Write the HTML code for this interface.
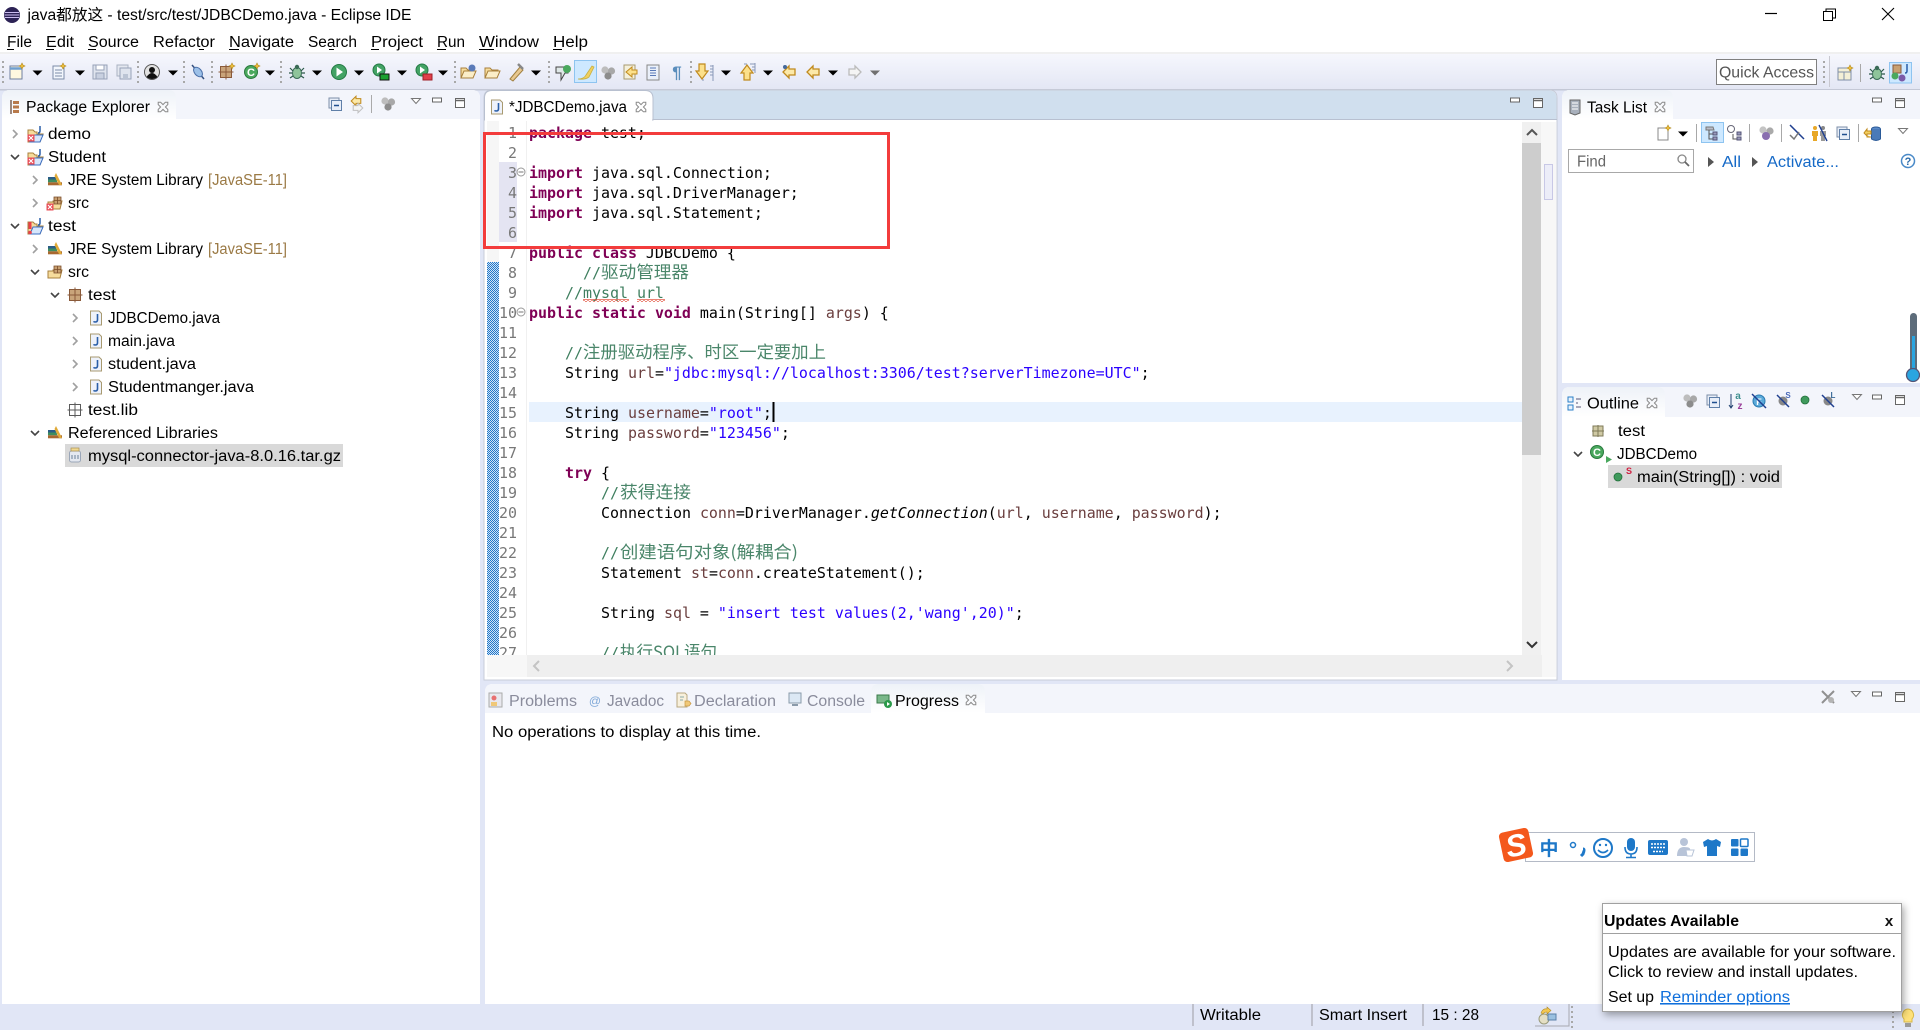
<!DOCTYPE html>
<html lang="en">
<head>
<meta charset="utf-8">
<title>java都放这 - test/src/test/JDBCDemo.java - Eclipse IDE</title>
<style>
html,body{margin:0;padding:0;background:#e1e6f6;width:1920px;height:1030px;overflow:hidden}
svg{display:block;position:absolute;left:0;top:0}
text{white-space:pre}
.u{font:15.5px "Liberation Sans","Noto Sans CJK SC",sans-serif;fill:#000}
.g{fill:#8a8c9c}
.m{font:14.95px "DejaVu Sans Mono","Liberation Mono",monospace;fill:#000}
.k{font-weight:bold;fill:#7f0055}
.s{fill:#2a00ff}
.v{fill:#6a3e3e}
.c{fill:#3f7f5f}
.z{font:17px "Noto Sans CJK SC","Liberation Sans",sans-serif;fill:#4a866a}
.n{font:14.95px "DejaVu Sans Mono","Liberation Mono",monospace;fill:#787878;text-anchor:end}
.l{fill:none;stroke:#555;stroke-width:1.5}
</style>
</head>
<body>
<svg width="1920" height="1030" viewBox="0 0 1920 1030" xmlns="http://www.w3.org/2000/svg">
<defs>
<linearGradient id="tb" x1="0" y1="0" x2="0" y2="1"><stop offset="0" stop-color="#f6f7fd"/><stop offset="1" stop-color="#e3e6f4"/></linearGradient>
<linearGradient id="tabg" x1="0" y1="0" x2="0" y2="1"><stop offset="0" stop-color="#eef2f8"/><stop offset="1" stop-color="#fff"/></linearGradient>
<pattern id="dith" width="2" height="2" patternUnits="userSpaceOnUse"><rect width="2" height="2" fill="#cfe3f7"/><rect width="1" height="1" fill="#2277c8"/><rect x="1" y="1" width="1" height="1" fill="#2277c8"/></pattern>
<pattern id="sq" width="4" height="3" patternUnits="userSpaceOnUse"><path d="M0 2.5L2 .5 4 2.5" fill="none" stroke="#e2503c" stroke-width="1"/></pattern>
<clipPath id="ed"><rect x="499" y="120" width="1023" height="535"/></clipPath>

<path id="ar" d="M-5-2.5H5L0 2.5z" fill="#000"/>
<path id="arg" d="M-5-2.5H5L0 2.5z" fill="#707070"/>
<g id="grip" fill="#a8a8a8"><rect x="-1" y="-11" width="2" height="2"/><rect x="-1" y="-6" width="2" height="2"/><rect x="-1" y="-1" width="2" height="2"/><rect x="-1" y="4" width="2" height="2"/><rect x="-1" y="9" width="2" height="2"/></g>
<path id="cr" d="M-2-4L2 0-2 4" fill="none" stroke="#a0a0a0" stroke-width="1.6"/>
<path id="cd" d="M-4-2L0 2 4-2" fill="none" stroke="#444" stroke-width="1.6"/>
<g id="x" fill="none" stroke="#8a8a8a" stroke-width=".85" transform="scale(1.2)"><path d="M-4-4h2l2 2 2-2h2v2l-2 2 2 2v2h-2l-2-2-2 2h-2v-2l2-2-2-2z"/></g>
<g id="min"><rect x="-4.5" y="-2" width="9" height="4" fill="#fff" stroke="#666" stroke-width="1"/></g>
<g id="max"><rect x="-4.5" y="-4.5" width="9" height="9" fill="#fff" stroke="#666" stroke-width="1"/><path d="M-4.5-2.5h9" stroke="#666" stroke-width="1.5"/></g>
<path id="vm" d="M-4.5-2.5h9L0 2.5z" fill="#fff" stroke="#777" stroke-width="1"/>
<g id="j"><path d="M-5.5-7H3l2.5 2.5V7h-11z" fill="#eef2fb" stroke="#a89a70"/><path d="M1.5-4v6q0 2-2.5 2-1 0-1.5-.6" fill="none" stroke="#2a5ea8" stroke-width="1.6"/></g>
<g id="lib"><rect x="-7" y="-3" width="8" height="2.6" fill="#2a5d86"/><rect x="-7" y="-.5" width="9" height="2.8" fill="#3d8d5f"/><rect x="-7" y="2.3" width="14" height="3" fill="#a8682f"/><path d="M1-7L7 5H4L-.5-4z" fill="#e0aa38"/></g>
<g id="pj"><path d="M-7-3V-6h5l2 2h2v2h6L5 6H-7z" fill="#f6dc9c" stroke="#a8803c" stroke-width="1"/><path d="M-5 6L-2-1H8L5 6z" fill="#d7e6fb" stroke="#3d6fc0" stroke-width="1"/><path d="M5-10v5q0 2-2 2" fill="none" stroke="#2a5ea8" stroke-width="1.5"/></g>
<g id="rx"><rect x="-3.5" y="-3.5" width="7" height="7" fill="#e8505a"/><path d="M-2-2l4 4M2-2l-4 4" stroke="#fff" stroke-width="1.1"/></g>
<g id="sf"><path d="M-7-2h5v-1h9l-2 8H-7z" fill="#f6dc9c" stroke="#a8803c"/><path d="M-1-7H6V0H-1z" fill="#c8a070" stroke="#7a4c2a" stroke-width=".8"/><path d="M2.5-7V0M-1-3.5H6" stroke="#7a4c2a" stroke-width=".8"/></g>
<g id="pk"><rect x="-5.5" y="-5.5" width="11" height="11" fill="#c9a47a" stroke="#8a5a3a"/><path d="M0-7.5V7.5M-7.5 0H7.5" stroke="#8a5a3a" stroke-width="1"/></g>
<g id="pk2"><rect x="-5.5" y="-5.5" width="11" height="11" fill="#fff" stroke="#5a5a5a"/><path d="M0-7.5V7.5M-7.5 0H7.5" stroke="#5a5a5a" stroke-width="1"/></g>
<g id="fold"><path d="M-7-4h5l2 2h6v2H-3L-6 6h-1z" fill="#f6dc9c" stroke="#a8803c"/><path d="M-7 6l3-7H8L5 6z" fill="#fbeec8" stroke="#a8803c"/></g>
<g id="filter"><circle cx="-3" cy="-2" r="3.6" fill="#bdbdbd"/><circle cx="3.5" cy="-1" r="3.6" fill="#a8a8a8"/><circle cx="0" cy="4" r="3.6" fill="#8c8c8c"/></g>
<g id="coll"><rect x="-6" y="-6" width="10" height="10" fill="#e8eef8" stroke="#7d8fa8"/><rect x="-3.5" y="-3.5" width="10" height="10" fill="#e8eef8" stroke="#5f7fa8"/><path d="M-1 1.5h5" stroke="#1f4f8f" stroke-width="1.5"/></g>
<g id="bug"><ellipse rx="4.5" ry="5.5" cy="1" fill="#8ec49a" stroke="#3a6b56"/><path d="M-7-4l3 3M7-4l-3 3M-8 1h3M8 1H5M-7 6l3-2M7 6l-3-2" stroke="#2c5a4a" stroke-width="1.2"/><circle cy="-5" r="2.2" fill="#3a6b56"/></g>
<g id="run"><circle r="7.5" fill="#43a365" stroke="#247a44"/><path d="M-2.5-4.5L4 0-2.5 4.5z" fill="#fff"/></g>
<g id="cg"><circle r="6.5" fill="#4aa85e" stroke="#2a7a3e"/><text x="0" y="4" text-anchor="middle" style="font:bold 11px 'Liberation Sans',sans-serif;fill:#fff">C</text></g>
<g id="dot"><circle r="4" fill="#3f9a5c" stroke="#23703c" stroke-width=".8"/></g>
<g id="bk"><path d="M6-3H0v-3L-6 0 0 6V3H6z" fill="#fce9a8" stroke="#c08a1e" stroke-width="1.3"/></g>
<g id="fw"><path d="M-6-3H0v-3L6 0 0 6V3H-6z" fill="#f4f4f4" stroke="#bbb" stroke-width="1.3"/></g>
</defs>

<!-- title & menu -->
<rect width="1920" height="52" fill="#fff"/>
<rect y="52" width="1920" height="2" fill="#f0f0f0"/>
<circle cx="12" cy="15" r="8" fill="#2c2255"/><path d="M5 12.5h14M4.5 15h15M5 17.5h14" stroke="#cbbcf0" stroke-width="1"/>
<text class="u" x="27.500" y="20" textLength="384" lengthAdjust="spacingAndGlyphs">java都放这 - test/src/test/JDBCDemo.java - Eclipse IDE</text>
<g class="u">
<text class="u" x="7" y="47" textLength="25" lengthAdjust="spacingAndGlyphs">File</text>
<text class="u" x="46" y="47" textLength="28" lengthAdjust="spacingAndGlyphs">Edit</text>
<text class="u" x="88" y="47" textLength="51" lengthAdjust="spacingAndGlyphs">Source</text>
<text class="u" x="153" y="47" textLength="62" lengthAdjust="spacingAndGlyphs">Refactor</text>
<text class="u" x="229" y="47" textLength="65" lengthAdjust="spacingAndGlyphs">Navigate</text>
<text class="u" x="308" y="47" textLength="49" lengthAdjust="spacingAndGlyphs">Search</text>
<text class="u" x="371" y="47" textLength="52" lengthAdjust="spacingAndGlyphs">Project</text>
<text class="u" x="437" y="47" textLength="28" lengthAdjust="spacingAndGlyphs">Run</text>
<text class="u" x="479" y="47" textLength="60" lengthAdjust="spacingAndGlyphs">Window</text>
<text class="u" x="553" y="47" textLength="35" lengthAdjust="spacingAndGlyphs">Help</text>
</g>
<path d="M7 49.5h7M46 49.5h8M88 49.5h8M199 49.5h5M229 49.5h10M329 49.5h5M371 49.5h8M437 49.5h9M479 49.5h15M553 49.5h9" stroke="#000" stroke-width="1"/>
<path d="M1765 13.5h12" stroke="#000" stroke-width="1.2"/>
<rect x="1823.5" y="11.5" width="9" height="9" fill="#fff" stroke="#000"/><path d="M1826 11.5V9h9.5v9H1833" fill="none" stroke="#000"/>
<path d="M1882 8l12 12M1894 8l-12 12" stroke="#000" stroke-width="1.1"/>

<!-- toolbar -->
<rect y="54" width="1920" height="36" fill="url(#tb)"/>
<rect y="89" width="1920" height="1.5" fill="#c4c8d6"/>
<use href="#grip" x="3" y="72"/><use href="#grip" x="138" y="72"/><use href="#grip" x="184" y="72"/><use href="#grip" x="212" y="72"/><use href="#grip" x="281" y="72"/><use href="#grip" x="455" y="72"/><use href="#grip" x="549" y="72"/><use href="#grip" x="691" y="72"/>
<g transform="translate(16 72)"><rect x="-6" y="-6" width="12" height="13" fill="#fff8e0" stroke="#6f7f9f"/><path d="M-6-3.5H6" stroke="#6f9fd0" stroke-width="2.5"/><path d="M6-9l1 2 2 1-2 1-1 2-1-2-2-1 2-1z" fill="#f0c040" stroke="#b08a20" stroke-width=".6"/></g>
<use href="#ar" x="37.5" y="73"/>
<g transform="translate(59 72)"><rect x="-6" y="-6" width="11" height="13" fill="#f2f6fc" stroke="#7c8ca8"/><path d="M-4-2h7M-4 1h7M-4 4h7" stroke="#7c8ca8"/><path d="M4-9l1 2 2 1-2 1-1 2-1-2-2-1 2-1z" fill="#f0c040" stroke="#b08a20" stroke-width=".6"/></g>
<use href="#ar" x="80" y="73"/>
<g transform="translate(100 72)"><rect x="-7" y="-7" width="14" height="14" fill="#dfe4ee" stroke="#97a2b8"/><rect x="-4" y="-7" width="8" height="5" fill="#fff" stroke="#97a2b8"/><rect x="-4" y="1" width="8" height="6" fill="#c8d0e0" stroke="#97a2b8"/></g>
<g transform="translate(124 72)"><rect x="-7" y="-7" width="11" height="11" fill="#e4e8f0" stroke="#aab2c2"/><rect x="-4" y="-4" width="11" height="11" fill="#dfe4ee" stroke="#97a2b8"/><rect x="-1" y="2" width="5" height="5" fill="#bbc4d4"/></g>
<g transform="translate(152 72)"><circle r="7.5" fill="#e2e2e2" stroke="#555"/><circle cy="-2" r="3" fill="#111"/><path d="M-5.5 5q5.5-8 11 0q-5.5 4-11 0z" fill="#111"/></g>
<use href="#ar" x="173" y="73"/>
<g transform="translate(198 72)"><path d="M-6-7L6 7" stroke="#33507f" stroke-width="1.5"/><ellipse rx="3.5" ry="5.5" transform="rotate(-40)" fill="#9cc0e8" stroke="#4a6fa8"/></g>
<g transform="translate(226 72)"><use href="#pk"/><path d="M6-9l1 2 2 1-2 1-1 2-1-2-2-1 2-1z" fill="#f0c040" stroke="#b08a20" stroke-width=".6"/></g>
<g transform="translate(251 72)"><use href="#cg"/><path d="M6-9l1 2 2 1-2 1-1 2-1-2-2-1 2-1z" fill="#f0c040" stroke="#b08a20" stroke-width=".6"/></g>
<use href="#ar" x="270" y="73"/>
<use href="#bug" x="297" y="72"/><use href="#ar" x="317" y="73"/>
<use href="#run" x="339" y="72"/><use href="#ar" x="359" y="73"/>
<g transform="translate(379 70)"><circle r="6" fill="#43a365" stroke="#247a44"/><path d="M-2-3.5L3 0-2 3.5z" fill="#fff"/><rect x="1" y="4" width="9" height="6" fill="#1aa030" stroke="#111"/></g><use href="#ar" x="402" y="73"/>
<g transform="translate(422 70)"><circle r="6" fill="#43a365" stroke="#247a44"/><path d="M-2-3.5L3 0-2 3.5z" fill="#fff"/><rect x="1" y="4" width="9" height="6" fill="#e0404a" stroke="#a02028"/></g><use href="#ar" x="443" y="73"/>
<g transform="translate(468 72)"><use href="#fold"/><circle cx="4" cy="-4" r="3.5" fill="#5a7ab8"/></g>
<use href="#fold" x="492" y="72"/>
<g transform="translate(516 72)"><path d="M-6 7L4-5l3 3L-3 9z" fill="#e8c890" stroke="#a08040"/><path d="M2-8l5 5" stroke="#888" stroke-width="2.5"/></g><use href="#ar" x="536" y="73"/>
<g transform="translate(563 72)"><path d="M-7-5H5v6H2L-2 8V1h-5z" fill="#dfe8e8" stroke="#444"/><circle cx="4" cy="-3" r="4" fill="#4aa85e"/></g>
<rect x="574.5" y="60.5" width="22" height="22" fill="#cde8ff" stroke="#8ec4f0"/>
<path d="M578 79q6 0 8-4l6-9 2 1-5 10q-4 3-11 2z" fill="#f0d060" stroke="#c8b040" stroke-width=".8"/>
<use href="#filter" x="608" y="72"/>
<g transform="translate(631 72)"><rect x="-7" y="-7" width="11" height="14" fill="#f4f0dc" stroke="#a89a70"/><path d="M6-2H1v-3L-5 0 1 5V2H6z" fill="#fce08a" stroke="#c08a1e"/></g>
<g transform="translate(653 72)"><rect x="-6" y="-7" width="12" height="15" fill="#eaf0fa" stroke="#888"/><path d="M-3-4h6M-3-1.5h6M-3 1h6M-3 3.5h6" stroke="#5a7ab8"/></g>
<text x="677" y="78" text-anchor="middle" style="font:bold 17px 'Liberation Sans',sans-serif;fill:#5b8ebd">¶</text>
<g transform="translate(705 72)"><path d="M-3-8h6v7h3L0 7-6-1h3z" fill="#fce08a" stroke="#c08a1e" stroke-width="1.2" transform="translate(-3 0)"/><path d="M5-6h3M5-3h3M5 0h3M5 3h3M8-7V9M-3 8h2" stroke="#8898b8"/></g><use href="#ar" x="726" y="73"/>
<g transform="translate(747 72)"><path d="M-3 8h6V1h3L0-7-6 1h3z" fill="#fce08a" stroke="#c08a1e" stroke-width="1.2"/><path d="M-3-8h3M3-8h5M5-5h3M5-2h3M8-9V1" stroke="#8898b8"/></g><use href="#ar" x="768" y="73"/>
<g transform="translate(789 72)"><use href="#bk"/><circle cx="-4" cy="-5" r="2" fill="#44689a"/></g>
<use href="#bk" x="813" y="72"/><use href="#ar" x="833" y="73"/>
<use href="#fw" x="855" y="72"/><use href="#arg" x="875" y="73"/>

<rect x="1716.5" y="59.5" width="100" height="25" fill="#fff" stroke="#808080"/>
<text class="u" x="1719" y="77.5" textLength="95" lengthAdjust="spacingAndGlyphs" style="fill:#555;font-size:16px">Quick Access</text>
<use href="#grip" x="1824" y="72"/><path d="M1829.5 56v31" stroke="#c8c8d0"/>
<g transform="translate(1845 74)"><rect x="-7" y="-6" width="13" height="12" fill="#f4efd6" stroke="#7f8fa8"/><path d="M-7-2h13M-1-2v8" stroke="#7f8fa8"/><path d="M5-9l1 2 2 1-2 1-1 2-1-2-2-1 2-1z" fill="#f0c040" stroke="#b08a20" stroke-width=".6"/></g>
<path d="M1860.5 64v18" stroke="#a8a8a8"/>
<use href="#bug" x="1877" y="73"/>
<rect x="1889.5" y="62.5" width="22" height="20.5" fill="#cde8ff" stroke="#8ec4f0"/>
<g transform="translate(1900 73)"><rect x="-7" y="-8" width="8" height="8" fill="#c8a070" stroke="#8a5a3a"/><circle cx="-5" cy="3" r="3.5" fill="#4aa85e"/><circle cx="2" cy="5" r="3.5" fill="#7a5aa8"/><path d="M7-9v7q0 2-2 2" fill="none" stroke="#2a5ea8" stroke-width="1.5"/></g>

<!-- package explorer -->
<path d="M2 1005V98q0-8 8-8H472q8 0 8 8v907z" fill="#fff"/>
<path d="M2 119V98q0-8 8-8H472q8 0 8 8v21z" fill="#f3f5fb"/>
<path d="M2 119V98q0-8 8-8H168q8 0 8 8v21z" fill="url(#tabg)"/>
<g transform="translate(15 107)"><path d="M-4-7v14" stroke="#6a4a3a" stroke-width="1.3"/><rect x="-2" y="-6" width="6" height="3" fill="#b8794a"/><rect x="-2" y="-1.5" width="6" height="3" fill="#b8794a"/><rect x="-2" y="3" width="6" height="3" fill="#b8794a"/></g>
<text class="u" x="26" y="112" textLength="124" lengthAdjust="spacingAndGlyphs">Package Explorer</text>
<use href="#x" x="163" y="107"/>
<use href="#coll" x="335" y="104"/>
<g transform="translate(357 104)"><use href="#bk" transform="translate(-1 -3) scale(.8)"/><use href="#fw" transform="translate(1 4) scale(.8)" style="opacity:.9"/></g>
<path d="M371.5 95v18" stroke="#aaa"/>
<use href="#filter" x="388" y="103"/><use href="#vm" x="416" y="101"/><use href="#min" x="437" y="100"/><use href="#max" x="460" y="103"/>

<!-- tree -->
<use href="#cr" x="15" y="134"/><use href="#pj" x="35" y="136"/><use href="#rx" x="31" y="138"/>
<text class="u" x="48" y="139" textLength="43" lengthAdjust="spacingAndGlyphs">demo</text>
<use href="#cd" x="15" y="157"/><use href="#pj" x="35" y="159"/><use href="#rx" x="31" y="161"/>
<text class="u" x="48" y="162" textLength="58" lengthAdjust="spacingAndGlyphs">Student</text>
<use href="#cr" x="35" y="180"/><use href="#lib" x="55" y="180"/>
<text class="u" x="68" y="185" textLength="135" lengthAdjust="spacingAndGlyphs">JRE System Library</text>
<text class="u" x="208" y="185" textLength="79" lengthAdjust="spacingAndGlyphs" style="fill:#9b7a45">[JavaSE-11]</text>
<use href="#cr" x="35" y="203"/><use href="#sf" x="55" y="204"/><use href="#rx" x="50" y="207"/>
<text class="u" x="68" y="208" textLength="21" lengthAdjust="spacingAndGlyphs">src</text>
<use href="#cd" x="15" y="226"/><use href="#pj" x="35" y="228"/>
<path d="M30 222v7" stroke="#e8404a" stroke-width="3"/><circle cx="30" cy="232.500" r="1.800" fill="#e8404a"/>
<text class="u" x="48" y="231" textLength="28" lengthAdjust="spacingAndGlyphs">test</text>
<use href="#cr" x="35" y="249"/><use href="#lib" x="55" y="249"/>
<text class="u" x="68" y="254" textLength="135" lengthAdjust="spacingAndGlyphs">JRE System Library</text>
<text class="u" x="208" y="254" textLength="79" lengthAdjust="spacingAndGlyphs" style="fill:#9b7a45">[JavaSE-11]</text>
<use href="#cd" x="35" y="272"/><use href="#sf" x="55" y="273"/>
<text class="u" x="68" y="277" textLength="21" lengthAdjust="spacingAndGlyphs">src</text>
<use href="#cd" x="55" y="295"/><use href="#pk" x="75" y="295"/>
<text class="u" x="88" y="300" textLength="28" lengthAdjust="spacingAndGlyphs">test</text>
<use href="#cr" x="75" y="318"/><use href="#j" x="96" y="318"/>
<text class="u" x="108" y="323" textLength="112" lengthAdjust="spacingAndGlyphs">JDBCDemo.java</text>
<use href="#cr" x="75" y="341"/><use href="#j" x="96" y="341"/>
<text class="u" x="108" y="346" textLength="67" lengthAdjust="spacingAndGlyphs">main.java</text>
<use href="#cr" x="75" y="364"/><use href="#j" x="96" y="364"/>
<text class="u" x="108" y="369" textLength="88" lengthAdjust="spacingAndGlyphs">student.java</text>
<use href="#cr" x="75" y="387"/><use href="#j" x="96" y="387"/>
<text class="u" x="108" y="392" textLength="146" lengthAdjust="spacingAndGlyphs">Studentmanger.java</text>
<use href="#pk2" x="75" y="410"/>
<text class="u" x="88" y="415" textLength="50" lengthAdjust="spacingAndGlyphs">test.lib</text>
<use href="#cd" x="35" y="433"/><use href="#lib" x="55" y="433"/>
<text class="u" x="68" y="438" textLength="150" lengthAdjust="spacingAndGlyphs">Referenced Libraries</text>
<rect x="65" y="444" width="278" height="23" fill="#d9d9d9"/>
<g transform="translate(75 456)"><rect x="-5.500" y="-5" width="11" height="11" rx="2" fill="#e4e8f0" stroke="#9aa6b8"/><rect x="-4" y="-8" width="8" height="3" fill="#f0d890" stroke="#a89050" stroke-width=".7"/><path d="M-3-1v4M0-1v4M3-1v4" stroke="#6a7f98" stroke-width="1"/></g>
<text class="u" x="88" y="461" textLength="253" lengthAdjust="spacingAndGlyphs">mysql-connector-java-8.0.16.tar.gz</text>

<!-- editor -->
<path d="M484 680V98q0-8 8-8H1549q8 0 8 8v582z" fill="#fff" stroke="#c8ccd8"/>
<path d="M484.500 119V98q0-7.500 7.500-7.500H1549q7.500 0 7.500 7.500v21z" fill="#d0dfee"/>
<rect x="484" y="119" width="1073" height="1" fill="#b8c0d0"/>
<path d="M484.500 120V98q0-7.500 7.500-7.500H645q8 0 8 8v21.500z" fill="#fff" stroke="#b8c0d0"/>
<rect x="485" y="118" width="167" height="3" fill="#fff"/>
<use href="#j" x="497" y="107"/>
<text class="u" x="509" y="112" textLength="118" lengthAdjust="spacingAndGlyphs">*JDBCDemo.java</text>
<use href="#x" x="641" y="107"/>
<use href="#min" x="1515" y="100"/><use href="#max" x="1538" y="103"/>

<rect x="487" y="121" width="12" height="534" fill="#f6f6f6"/>
<rect x="499" y="121" width="28" height="534" fill="#fff"/>
<rect x="526" y="121" width="1" height="534" fill="#f0f0f0"/>
<rect x="499" y="162" width="18" height="80" fill="#e4e4f2"/>
<rect x="487" y="262" width="12" height="393" fill="url(#dith)"/>
<rect x="529" y="402" width="993" height="20" fill="#e8f2fe"/>

<g clip-path="url(#ed)"><g transform="translate(0 1)">
<g class="n">
<text class="n" x="517" y="137">1</text><text class="n" x="517" y="157">2</text><text class="n" x="517" y="177">3</text><text class="n" x="517" y="197">4</text><text class="n" x="517" y="217">5</text><text class="n" x="517" y="237">6</text><text class="n" x="517" y="257">7</text><text class="n" x="517" y="277">8</text><text class="n" x="517" y="297">9</text><text class="n" x="517" y="317">10</text><text class="n" x="517" y="337">11</text><text class="n" x="517" y="357">12</text><text class="n" x="517" y="377">13</text><text class="n" x="517" y="397">14</text><text class="n" x="517" y="417">15</text><text class="n" x="517" y="437">16</text><text class="n" x="517" y="457">17</text><text class="n" x="517" y="477">18</text><text class="n" x="517" y="497">19</text><text class="n" x="517" y="517">20</text><text class="n" x="517" y="537">21</text><text class="n" x="517" y="557">22</text><text class="n" x="517" y="577">23</text><text class="n" x="517" y="597">24</text><text class="n" x="517" y="617">25</text><text class="n" x="517" y="637">26</text><text class="n" x="517" y="657">27</text>
</g>
<text class="m" x="529" y="137"><tspan class="k">package</tspan> test;</text>
<text class="m" x="529" y="177"><tspan class="k">import</tspan> java.sql.Connection;</text>
<text class="m" x="529" y="197"><tspan class="k">import</tspan> java.sql.DriverManager;</text>
<text class="m" x="529" y="217"><tspan class="k">import</tspan> java.sql.Statement;</text>
<text class="m" x="529" y="257"><tspan class="k">public</tspan> <tspan class="k">class</tspan> JDBCDemo {</text>
<text class="m c" x="583" y="277">//</text><text class="z" x="601" y="277" textLength="88" lengthAdjust="spacingAndGlyphs">驱动管理器</text>
<text class="m c" x="565" y="297">//mysql url</text>
<rect x="583" y="298" width="46" height="3" fill="url(#sq)"/><rect x="637" y="298" width="28" height="3" fill="url(#sq)"/>
<text class="m" x="529" y="317"><tspan class="k">public</tspan> <tspan class="k">static</tspan> <tspan class="k">void</tspan> main(String[] <tspan class="v">args</tspan>) {</text>
<text class="m c" x="565" y="357">//</text><text class="z" x="583" y="357" textLength="243" lengthAdjust="spacingAndGlyphs">注册驱动程序、时区一定要加上</text>
<text class="m" x="565" y="377">String <tspan class="v">url</tspan>=<tspan class="s">"jdbc:mysql://localhost:3306/test?serverTimezone=UTC"</tspan>;</text>
<text class="m" x="565" y="417">String <tspan class="v">username</tspan>=<tspan class="s">"root"</tspan>;</text>
<text class="m" x="565" y="437">String <tspan class="v">password</tspan>=<tspan class="s">"123456"</tspan>;</text>
<text class="m" x="565" y="477"><tspan class="k">try</tspan> {</text>
<text class="m c" x="601" y="497">//</text><text class="z" x="620" y="497" textLength="71" lengthAdjust="spacingAndGlyphs">获得连接</text>
<text class="m" x="601" y="517">Connection <tspan class="v">conn</tspan>=DriverManager.<tspan font-style="italic">getConnection</tspan>(<tspan class="v">url</tspan>, <tspan class="v">username</tspan>, <tspan class="v">password</tspan>);</text>
<text class="m c" x="601" y="557">//</text><text class="z" x="620" y="557" textLength="178" lengthAdjust="spacingAndGlyphs">创建语句对象(解耦合)</text>
<text class="m" x="601" y="577">Statement <tspan class="v">st</tspan>=<tspan class="v">conn</tspan>.createStatement();</text>
<text class="m" x="601" y="617">String <tspan class="v">sql</tspan> = <tspan class="s">"insert test values(2,'wang',20)"</tspan>;</text>
<text class="m c" x="601" y="657">//</text><text class="z" x="620" y="657" textLength="97" lengthAdjust="spacingAndGlyphs">执行SQL语句</text>
</g></g>
<rect x="772.500" y="402" width="2" height="20" fill="#000"/>
<g fill="#fff" stroke="#999" stroke-width="1"><circle cx="521" cy="172" r="4"/><circle cx="521" cy="312" r="4"/></g>
<path d="M518.500 172h5M518.500 312h5" stroke="#777"/>

<rect x="1522" y="122" width="19" height="533" fill="#f0f0f0"/>
<rect x="1522" y="143" width="19" height="312" fill="#cdcdcd"/>
<path d="M1527 135l5-5 5 5" fill="none" stroke="#555" stroke-width="2"/>
<path d="M1527 642l5 5 5-5" fill="none" stroke="#333" stroke-width="2"/>
<rect x="1541" y="122" width="15" height="555" fill="#f7f7f7"/>
<rect x="1544.500" y="164.500" width="8" height="35" fill="#ecedf8" stroke="#c8c8e6"/>
<rect x="527" y="655" width="1015" height="22" fill="#efefef"/>
<rect x="487" y="655" width="40" height="22" fill="#f7f7f7"/>
<path d="M539 661l-5 5 5 5M1507 661l5 5-5 5" fill="none" stroke="#c4c4c4" stroke-width="2"/>

<!-- task list -->
<path d="M1562 383V98q0-8 8-8H1920V383z" fill="#fff"/>
<path d="M1562 119V98q0-8 8-8H1920V119z" fill="#f3f5fb"/>
<path d="M1562 119V98q0-8 8-8H1665q8 0 8 8v21z" fill="url(#tabg)"/>
<g transform="translate(1575 107)"><path d="M-5-7H5V6l-5 2-5-2z" fill="#a8b0bc" stroke="#666"/><path d="M-3-4h6M-3-1h6M-3 2h6" stroke="#fff"/></g>
<text class="u" x="1587" y="112.500" textLength="60" lengthAdjust="spacingAndGlyphs">Task List</text>
<use href="#x" x="1660" y="107"/><use href="#min" x="1877" y="100"/><use href="#max" x="1900" y="103"/>
<g transform="translate(1663 133)"><path d="M-5-5H5V7H-5z" fill="#fff" stroke="#888"/><path d="M5-8l1 2 2 1-2 1-1 2-1-2-2-1 2-1z" fill="#f0c040" stroke="#b08a20" stroke-width=".6"/></g>
<use href="#ar" x="1683" y="134"/>
<path d="M1696.500 124v18M1749.500 124v18M1781.500 124v18M1858.500 124v18" stroke="#a8a8a8"/>
<rect x="1701.500" y="122.500" width="22" height="20" fill="#cde8ff" stroke="#8ec4f0"/>
<g transform="translate(1712 133)"><path d="M-6-6H1l1 3H-6z" fill="#b8bcc8" stroke="#777"/><path d="M-3-3V6H1M-3 1H1" stroke="#555" fill="none"/><rect x="1" y="-1" width="4" height="3" fill="#99b" stroke="#557"/><rect x="1" y="4" width="4" height="3" fill="#99b" stroke="#557"/></g>
<g transform="translate(1735 133)"><circle cx="-4" cy="-4" r="3.500" fill="#fff" stroke="#667"/><path d="M-2 1V6H2" stroke="#555" fill="none"/><rect x="2" y="-1" width="4" height="3" fill="#99b" stroke="#557"/><rect x="2" y="4" width="4" height="3" fill="#99b" stroke="#557"/></g>
<g transform="translate(1766 133)"><circle cx="-3" cy="-3" r="3.600" fill="#c4c4c4"/><circle cx="4" cy="-2" r="3.600" fill="#aaa"/><circle cx="0" cy="3" r="4" fill="#8a6fb0"/></g>
<path d="M1790 125l14 14" stroke="#1f3f8f" stroke-width="1.500"/><path d="M1790 135l4 4 5-7" fill="none" stroke="#777" stroke-width="1.500"/>
<g transform="translate(1819 133)"><circle cx="-4" cy="-5" r="2" fill="#e8a828"/><path d="M-7-2h6v5h-1v5h-4V3h-1z" fill="#e8a828"/><circle cx="4" cy="-5" r="2" fill="#888"/><path d="M1-2h6v5H6v5H2V3H1z" fill="#999"/><path d="M0-8L8 8" stroke="#1f3f8f" stroke-width="1.400"/></g>
<use href="#coll" x="1843" y="133"/>
<g transform="translate(1873 133)"><ellipse cx="3" cy="-4" rx="4.500" ry="2" fill="#5a8ac8" stroke="#2a5a98"/><path d="M-1.500-4V6q4.500 3 9 0V-4" fill="#4a7ab8" stroke="#2a5a98"/><path d="M-2-2H-6V-4L-9 0-6 3V1H-2zM-2 4h-4V2" fill="#f4d060" stroke="#c08a1e"/></g>
<use href="#vm" x="1903" y="131"/>
<rect x="1568.500" y="149.500" width="125" height="23" fill="#fff" stroke="#a8a8a8"/>
<text class="u" x="1577" y="166.500" textLength="29" lengthAdjust="spacingAndGlyphs" style="fill:#666">Find</text>
<circle cx="1682" cy="159" r="4" fill="#fff" stroke="#888" stroke-width="1.300"/><path d="M1685 162l4 4" stroke="#666" stroke-width="1.800"/>
<path d="M1708 157l6 5-6 5zM1752 157l6 5-6 5z" fill="#555"/>
<text class="u" x="1722" y="167" textLength="19" lengthAdjust="spacingAndGlyphs" style="fill:#1569c7">All</text>
<text class="u" x="1767" y="167" textLength="72" lengthAdjust="spacingAndGlyphs" style="fill:#1569c7">Activate...</text>
<circle cx="1908" cy="161" r="6.500" fill="#fff" stroke="#4a8ac8" stroke-width="1.500"/><text x="1908" y="165" text-anchor="middle" style="font:bold 11px 'Liberation Sans',sans-serif;fill:#2a6aa8">?</text>
<rect x="1910" y="313" width="7" height="60" rx="3.500" fill="#5d6c7a"/><rect x="1912" y="336" width="3" height="36" fill="#2aa5e0"/><circle cx="1913" cy="375" r="6.500" fill="#2aa5e0" stroke="#557" stroke-width="1.300"/>

<!-- outline -->
<path d="M1562 680V395q0-8 8-8H1920V680z" fill="#fff"/>
<path d="M1562 417V395q0-8 8-8H1920V417z" fill="#f3f5fb"/>
<path d="M1562 417V395q0-8 8-8H1657q8 0 8 8v22z" fill="url(#tabg)"/>
<g transform="translate(1574 403)" fill="#e8f2fc" stroke="#2a80c8"><rect x="-6" y="-6" width="5" height="5"/><rect x="-6" y="2" width="5" height="5"/><path d="M2-4h5M2 4h5M2 0h2" fill="none" stroke="#557"/></g>
<text class="u" x="1587" y="408.500" textLength="52" lengthAdjust="spacingAndGlyphs">Outline</text>
<use href="#x" x="1652" y="403"/>
<use href="#filter" x="1690" y="400"/><use href="#coll" x="1713" y="401"/>
<g transform="translate(1736 401)"><path d="M-5-7V7M-7 4l2 3 2-3" fill="none" stroke="#1f3f6f"/><text x="2" y="-2" text-anchor="middle" style="font:bold 10px 'Liberation Sans',sans-serif;fill:#3f8f8f">a</text><text x="4" y="8" text-anchor="middle" style="font:bold 10px 'Liberation Sans',sans-serif;fill:#9a3f9a">z</text></g>
<g transform="translate(1759 401)"><circle r="6" fill="#5aaada" stroke="#2a7ab0"/><text x="0" y="4" text-anchor="middle" style="font:bold 9px 'Liberation Sans',sans-serif;fill:#fff">F</text><path d="M-7-7L7 7" stroke="#1f3f8f" stroke-width="1.500"/></g>
<g transform="translate(1783 401)"><circle r="4.500" fill="#888"/><path d="M-6-6L6 6" stroke="#1f3f8f" stroke-width="1.500"/><text x="5" y="-3" text-anchor="middle" style="font:bold 8px 'Liberation Sans',sans-serif;fill:#4a6ab8">S</text></g>
<use href="#dot" x="1805" y="400"/>
<g transform="translate(1828 401)"><circle r="4.500" fill="#888"/><path d="M-6-6L6 6" stroke="#1f3f8f" stroke-width="1.500"/><text x="5" y="-3" text-anchor="middle" style="font:bold 8px 'Liberation Sans',sans-serif;fill:#3a6a98">L</text></g>
<use href="#vm" x="1857" y="397"/><use href="#min" x="1877" y="397"/><use href="#max" x="1900" y="400"/>
<g transform="translate(1598 431)"><rect x="-5" y="-5" width="10" height="10" fill="#cfc9a4" stroke="#7f7a58"/><path d="M0-6V6M-6 0H6" stroke="#7f7a58"/></g>
<text class="u" x="1618" y="436" textLength="27" lengthAdjust="spacingAndGlyphs">test</text>
<use href="#cd" x="1578" y="454"/><use href="#cg" x="1597" y="452"/><path d="M1606 456l6 3.500-6 3.500z" fill="#4aa85e"/>
<text class="u" x="1617" y="459" textLength="80" lengthAdjust="spacingAndGlyphs">JDBCDemo</text>
<rect x="1608" y="465" width="174" height="23" fill="#d9d9d9"/>
<use href="#dot" x="1618" y="477"/><text x="1629" y="474" text-anchor="middle" style="font:bold 9px 'Liberation Sans',sans-serif;fill:#d02040">S</text>
<text class="u" x="1637" y="482" textLength="143" lengthAdjust="spacingAndGlyphs">main(String[]) : void</text>

<!-- bottom panel -->
<path d="M485 1004V692q0-8 8-8H1920V1004z" fill="#fff"/>
<path d="M485 713V692q0-8 8-8H1920V713z" fill="#f3f5fb"/>
<path d="M871 713V692q0-8 8-8H977q8 0 8 8v21z" fill="url(#tabg)"/>
<g transform="translate(496 700)"><rect x="-7" y="-7" width="13" height="14" fill="#e8e8ee" stroke="#aaa"/><circle cy="-2" cx="-2" r="2.500" fill="#e87070"/><rect x="-5" y="2" width="6" height="4" fill="#f0c878"/></g>
<text class="u g" x="509" y="706" textLength="68" lengthAdjust="spacingAndGlyphs">Problems</text>
<text x="595" y="705" text-anchor="middle" style="font:12px 'Liberation Sans',sans-serif;fill:#7fa8d8">@</text>
<text class="u g" x="607" y="706" textLength="57" lengthAdjust="spacingAndGlyphs">Javadoc</text>
<g transform="translate(682 700)"><path d="M-5-7H3L5-5V7H-5z" fill="#f8f0dc" stroke="#b8a880"/><path d="M3 1H7L9 3.500 7 6H3z" fill="#f0c878" stroke="#c89840" stroke-width=".7"/><path d="M-2-3h4M-2 0h3" stroke="#8aa"/></g>
<text class="u g" x="694" y="706" textLength="82" lengthAdjust="spacingAndGlyphs">Declaration</text>
<g transform="translate(795 699)"><rect x="-6" y="-6" width="12" height="10" fill="#dce8f4" stroke="#8a9aaa"/><rect x="-3" y="5" width="6" height="2" fill="#8a9aaa"/></g>
<text class="u g" x="807" y="706" textLength="58" lengthAdjust="spacingAndGlyphs">Console</text>
<g transform="translate(884 700)"><rect x="-7" y="-5" width="12" height="8" fill="#7ab88a" stroke="#3a7a4a"/><circle cx="4" cy="4" r="4" fill="#2a9a4a"/><path d="M3 2l3 2-3 2z" fill="#fff"/></g>
<text class="u" x="895" y="706" textLength="64" lengthAdjust="spacingAndGlyphs">Progress</text>
<use href="#x" x="971" y="700"/>
<g transform="translate(1828 697)"><path d="M-6-6L6 6M6-6L-6 6" stroke="#909090" stroke-width="2"/><circle cx="3" cy="3" r="3" fill="#b4b4b4"/></g>
<use href="#vm" x="1856" y="694"/><use href="#min" x="1877" y="694"/><use href="#max" x="1900" y="697"/>
<text class="u" x="492" y="737" textLength="269" lengthAdjust="spacingAndGlyphs">No operations to display at this time.</text>

<!-- sogou IME -->
<rect x="1525.500" y="832.500" width="229" height="29" fill="#fff" stroke="#b4bac6"/>
<g transform="translate(1516 845) rotate(-12)"><rect x="-15" y="-15" width="30" height="30" rx="4" fill="#f4581c"/><text x="0" y="11" text-anchor="middle" style="font:bold italic 31px 'Liberation Sans',sans-serif;fill:#fff">S</text></g>
<text x="1549" y="855" text-anchor="middle" style="font:bold 19px 'Noto Sans CJK SC',sans-serif;fill:#1e78c8">中</text>
<circle cx="1573" cy="845" r="2.500" fill="none" stroke="#1e78c8" stroke-width="1.500"/>
<path d="M1583 849q2 0 0 5l-2 2" fill="none" stroke="#1e78c8" stroke-width="3"/>
<circle cx="1603" cy="848" r="9" fill="#fff" stroke="#1e78c8" stroke-width="2"/><circle cx="1600" cy="845" r="1.200" fill="#1e78c8"/><circle cx="1606" cy="845" r="1.200" fill="#1e78c8"/><path d="M1598 850q5 5 10 0" fill="none" stroke="#1e78c8" stroke-width="1.600"/>
<rect x="1627" y="838" width="8" height="13" rx="4" fill="#1e78c8"/><path d="M1625 847q0 7 6 7t6-7M1631 854v3M1626 857.500h10" fill="none" stroke="#1e78c8" stroke-width="1.600"/>
<rect x="1648" y="840" width="20" height="15" rx="2" fill="#1e78c8"/><path d="M1651 844h14M1651 847.500h14M1653 851.500h10" stroke="#fff" stroke-width="1.500" stroke-dasharray="2 1"/>
<circle cx="1684" cy="842" r="4" fill="#b8c4d8"/><path d="M1677 856q0-9 7-9t6 3v6z" fill="#b8c4d8"/><path d="M1686 850h8l-2 6h-5z" fill="#fff" stroke="#b8c4d8"/>
<path d="M1708 839l-5 3 1 5 3-1v10h10v-10l3 1 1-5-5-3q-4 3-8 0z" fill="#1e78c8"/>
<rect x="1731" y="839" width="7.500" height="7.500" rx="1" fill="#1e78c8"/><rect x="1740.500" y="839" width="7.500" height="7.500" rx="1" fill="#fff" stroke="#1e78c8" stroke-width="1.500"/><rect x="1731" y="848.500" width="7.500" height="7.500" rx="1" fill="#1e78c8"/><rect x="1740.500" y="848.500" width="7.500" height="7.500" rx="1" fill="#1e78c8"/>

<!-- status bar -->
<rect y="1004" width="1920" height="26" fill="#e1e6f6"/>
<path d="M1193 1004v22M1312 1004v22M1423 1004v22" stroke="#a8a8b0" stroke-width="1.200"/>
<text class="u" x="1200" y="1020" textLength="61" lengthAdjust="spacingAndGlyphs">Writable</text>
<text class="u" x="1319" y="1020" textLength="88" lengthAdjust="spacingAndGlyphs">Smart Insert</text>
<text class="u" x="1432" y="1020" textLength="47" lengthAdjust="spacingAndGlyphs">15 : 28</text>
<path d="M1535 1026h34v-22" fill="none" stroke="#a8a8b0"/>
<g transform="translate(1546 1016)"><circle cx="-2" cy="3" r="5" fill="#e4dfc4" stroke="#9a9a7a"/><rect x="2" y="-2" width="8" height="6" fill="#9ac0e0" stroke="#5a80a8"/><path d="M-5-3q2-5 6-4V-9l4 3.500L1-2v-2q-3 0-4 2z" fill="#f4c850" stroke="#b08a20" stroke-width=".6"/></g>
<use href="#grip" x="1572" y="1017"/>
<use href="#grip" x="1893" y="1017"/>
<path d="M1908 1009a6 6 0 0 1 4 10v3h-8v-3a6 6 0 0 1 4-10z" fill="#ffe27a" stroke="#d8b848"/><rect x="1905" y="1023" width="6" height="4" fill="#9a9a9a"/>

<!-- popup -->
<rect x="1602.500" y="903.500" width="299" height="108" fill="#fff" stroke="#a0a0a0" style="filter:drop-shadow(2px 3px 4px rgba(0,0,0,.35))"/>
<path d="M1603 933.500h298" stroke="#a0a0a0"/>
<text class="u" x="1604" y="926" textLength="135" lengthAdjust="spacingAndGlyphs" style="font-weight:bold">Updates Available</text>
<text x="1889" y="926" text-anchor="middle" style="font:bold 15px 'Liberation Sans',sans-serif;fill:#111">x</text>
<text class="u" x="1608" y="957" textLength="288" lengthAdjust="spacingAndGlyphs">Updates are available for your software.</text>
<text class="u" x="1608" y="977" textLength="250" lengthAdjust="spacingAndGlyphs">Click to review and install updates.</text>
<text class="u" x="1608" y="1002" textLength="46" lengthAdjust="spacingAndGlyphs">Set up</text>
<text class="u" x="1660" y="1002" textLength="130" lengthAdjust="spacingAndGlyphs" style="fill:#0f6fdc;text-decoration:underline">Reminder options</text>

<!-- red annotation box -->
<rect x="484.500" y="133.500" width="404" height="114" fill="none" stroke="#f33c3c" stroke-width="3"/>
</svg>
</body>
</html>
